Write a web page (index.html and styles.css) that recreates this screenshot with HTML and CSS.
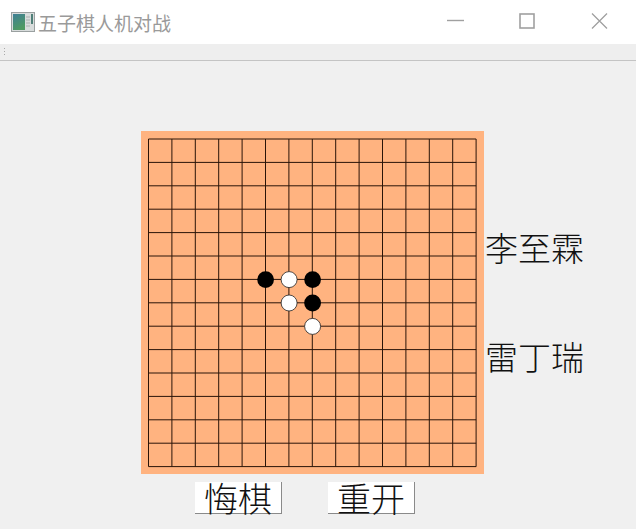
FILE: index.html
```html
<!DOCTYPE html>
<html lang="zh-CN">
<head>
    <meta charset="UTF-8">
    <meta name="viewport" content="width=device-width, initial-scale=1.0">
    <title>五子棋人机对战</title>
    <link rel="stylesheet" href="styles.css">
</head>
<body>
    <div class="titlebar">
        <svg class="app-icon" width="24" height="20" viewBox="0 0 24 20">
            <defs>
                <linearGradient id="panel" x1="0" y1="0" x2="0.4" y2="1">
                    <stop offset="0" stop-color="#3f7f96"/>
                    <stop offset="1" stop-color="#4f9a62"/>
                </linearGradient>
            </defs>
            <rect x="0.5" y="0.5" width="23" height="19" fill="#d8dcdc" stroke="#9aa0a0"/>
            <rect x="2" y="2" width="12" height="16" fill="url(#panel)"/>
            <path d="M15 5h4M15 8h4M15 11h4M15 14h4" stroke="#a9b0ae"/>
            <rect x="20" y="2" width="2" height="10" fill="#4f7f78"/>
        </svg>
        <span class="title">五子棋人机对战</span>
        <div class="window-controls">
            <svg width="18" height="16" viewBox="0 0 18 16"><path d="M1 7.5h17" stroke="#a0a0a0" stroke-width="1.4"/></svg>
            <svg width="17" height="16" viewBox="0 0 17 16"><rect x="1" y="1" width="14" height="14" fill="none" stroke="#a0a0a0" stroke-width="1.6"/></svg>
            <svg width="17" height="16" viewBox="0 0 17 16"><path d="M1 0.5l15 15M16 0.5l-15 15" fill="none" stroke="#a0a0a0" stroke-width="1.3"/></svg>
        </div>
    </div>

    <div class="toolbar"><span class="grip"></span></div>

    <div class="main">
        <div class="game-row">
            <div class="board">
                <svg width="343" height="343" viewBox="141 131 343 343">
                    <path class="grid" d="M148.5 139V466.6M171.9 139V466.6M195.3 139V466.6M218.7 139V466.6M242.1 139V466.6M265.5 139V466.6M288.9 139V466.6M312.3 139V466.6M335.7 139V466.6M359.1 139V466.6M382.5 139V466.6M405.9 139V466.6M429.3 139V466.6M452.7 139V466.6M476.1 139V466.6"/>
                    <path class="grid" d="M148.5 139H476.1M148.5 162.4H476.1M148.5 185.8H476.1M148.5 209.2H476.1M148.5 232.6H476.1M148.5 256H476.1M148.5 279.4H476.1M148.5 302.8H476.1M148.5 326.2H476.1M148.5 349.6H476.1M148.5 373H476.1M148.5 396.4H476.1M148.5 419.8H476.1M148.5 443.2H476.1M148.5 466.6H476.1"/>
                    <circle class="stone-black" cx="265.6" cy="279.6" r="8.4"/>
                    <circle class="stone-white" cx="289.1" cy="279.6" r="8"/>
                    <circle class="stone-black" cx="312.6" cy="279.6" r="8.4"/>
                    <circle class="stone-white" cx="289.1" cy="303" r="8"/>
                    <circle class="stone-black" cx="312.6" cy="303" r="8.4"/>
                    <circle class="stone-white" cx="312.6" cy="326.4" r="8"/>
                </svg>
            </div>
            <div class="players">
                <div class="player">李至霖</div>
                <div class="player">雷丁瑞</div>
            </div>
        </div>
        <div class="actions">
            <button class="action">悔棋</button>
            <button class="action">重开</button>
        </div>
    </div>
</body>
</html>
```

FILE: styles.css
```css
html, body {
    margin: 0;
    height: 100%;
}

body {
    background-color: #f0f0f0;
    font-family: "Noto Sans CJK SC", "Liberation Sans", sans-serif;
    overflow: hidden;
}

.titlebar {
    height: 44px;
    background-color: #fff;
    display: flex;
    align-items: center;
    padding-left: 11px;
    box-sizing: border-box;
}

.app-icon {
    margin-right: 3px;
}

.title {
    font-size: 19px;
    color: #9a9a9a;
}

.window-controls {
    margin-left: auto;
    display: flex;
    align-items: center;
    gap: 55px;
    padding: 0 28px 2px 0;
}

.toolbar {
    height: 16px;
    background-color: #eeeeee;
    border-bottom: 1px solid #c4c4c4;
    display: flex;
    align-items: center;
    padding-left: 4px;
}

.grip {
    width: 1px;
    height: 9px;
    background-image: repeating-linear-gradient(#a8a8a8 0 1px, transparent 1px 3px);
}

.main {
    padding: 70px 0 0 141px;
}

.game-row {
    display: flex;
}

.board {
    width: 343px;
    height: 343px;
    background-color: #ffb380;
}

.board svg {
    display: block;
}

.grid {
    fill: none;
    stroke: #2a1408;
    stroke-width: 1;
}

.stone-black {
    fill: #000;
}

.stone-white {
    fill: #fff;
    stroke: #222;
    stroke-width: 0.8;
}

.players {
    padding: 92px 0 0 1px;
    display: flex;
    flex-direction: column;
    gap: 61px;
}

.player {
    font-size: 33px;
    font-weight: 300;
    line-height: 48px;
    color: #111;
}

.actions {
    display: flex;
    gap: 46px;
    margin: 8px 0 0 54px;
}

.action {
    width: 87px;
    height: 32px;
    padding: 0 0 5px;
    border: none;
    border-right: 1px solid #8a8a8a;
    border-bottom: 1px solid #8a8a8a;
    background-color: #fff;
    font-family: inherit;
    font-size: 34px;
    font-weight: 300;
    line-height: 32px;
    color: #111;
}
```
